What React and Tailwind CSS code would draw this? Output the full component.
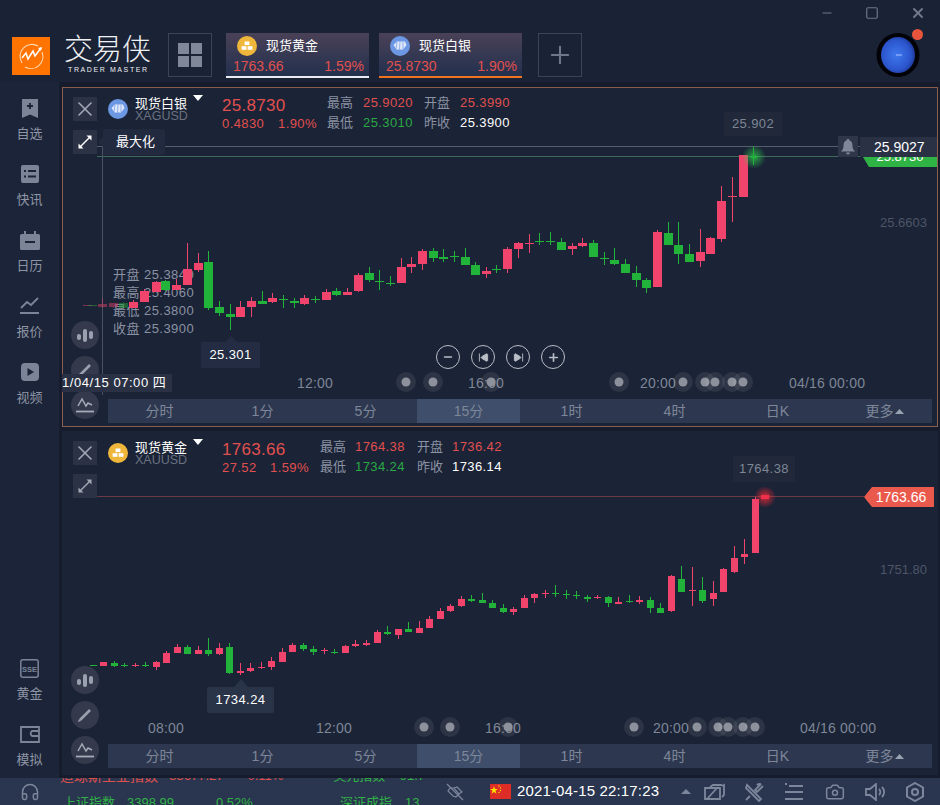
import React from 'react';
import { Minus, Square, X, Headphones, Camera, Plus, SkipBack, SkipForward } from 'lucide-react';

const P = '#f0446c', G = '#22b33a';
// [zoomX, wickTop, wickBottom, bodyTop, bodyBottom, colour]
const silverA = [
  [80,226,228,226,228,P],[95,224,228,224,228,G],[125,205,235,222,230,P],[158,218,234,218,230,P],[190,216,235,220,235,G],[220,210,235,215,235,P],[253,178,215,183,215,P],[287,152,185,155,185,P],[316,150,182,152,180,G],[349,148,180,165,180,P],[382,38,165,118,165,P],[415,68,125,100,120,P],[445,62,240,96,235,G],[478,212,258,231,248,G],[511,222,300,253,260,G],[541,212,262,231,262,P],[574,200,262,212,231,P],[607,182,222,213,221,G],[637,188,218,204,216,P],[670,195,235,207,210,G],[703,205,235,214,218,G],[733,195,225,204,222,P],[766,198,218,208,210,G],[799,178,210,186,210,P],[829,175,197,183,194,G],[862,173,195,186,194,P],[895,128,187,135,183,P],[928,112,157,129,150,G],[958,120,180,153,156,G],[991,137,168,158,160,G],[1024,85,160,111,159,P],[1054,80,128,102,110,P],[1087,57,120,63,102,P],[1120,55,97,63,83,G],[1150,58,97,82,86,G],[1183,62,95,79,81,G],[1216,55,105,82,104,G],[1246,95,135,105,134,G],[1279,110,145,123,132,P],[1309,105,130,117,119,G],
];
const silverB = [
  [22,172,250,178,237,P],[55,155,205,158,178,P],[88,133,190,158,163,P],[118,130,165,152,155,G],[151,127,165,152,155,G],[184,145,180,157,180,G],[217,158,195,168,177,P],[247,143,172,158,168,P],[280,150,202,159,200,G],[313,185,225,204,208,G],[343,175,225,210,222,G],[376,207,250,222,248,G],[409,228,292,250,270,G],[439,265,310,270,294,G],[472,120,292,126,292,P],[505,97,165,129,165,G],[535,97,222,166,192,G],[568,162,217,192,216,G],[601,118,230,186,213,P],[631,140,192,144,192,P],[664,-12,155,33,148,P],[697,-39,97,18,21,P],[730,-105,21,-105,21,P],
];
const goldA = [
  [100,705,707,705,707,G],[130,695,709,697,707,P],[163,692,712,698,709,G],[193,698,710,704,708,G],[226,698,712,704,707,P],[256,695,712,705,709,G],[289,692,720,697,711,P],[319,662,700,669,698,P],[352,643,670,651,668,P],[382,645,672,651,671,G],[415,648,672,660,671,P],[445,625,677,660,672,G],[478,640,674,654,672,P],[508,638,732,651,728,G],[541,698,736,723,730,P],[571,700,727,713,723,P],[604,697,716,711,714,P],[634,680,720,692,711,P],[667,655,697,666,695,P],[697,640,666,645,665,P],[730,638,662,645,657,G],[760,648,675,657,667,G],[793,655,672,661,664,P],[823,658,672,665,668,G],[856,645,670,649,668,P],[886,630,650,642,648,P],[919,630,648,640,645,P],[952,600,640,606,639,P],[982,587,614,606,611,G],[1015,597,627,597,616,P],[1045,575,607,598,605,G],[1078,573,610,594,608,P],[1108,557,595,567,594,P],[1141,535,568,543,567,P],[1171,522,545,527,543,P],[1204,498,530,506,528,P],[1234,494,515,508,513,G],[1267,488,520,511,519,G],[1297,510,534,519,533,G],[1330,522,549,534,546,G],[1360,530,555,537,545,P],
];
const goldB = [
  [13,405,445,414,444,P],[43,400,430,402,413,P],[76,390,413,398,402,P],[106,375,410,398,402,G],[139,390,416,401,405,G],[169,393,418,404,409,G],[202,405,425,410,416,G],[232,405,418,411,415,P],[265,408,440,410,428,G],[295,410,433,427,431,P],[328,405,430,422,425,G],[358,408,432,420,426,P],[391,412,460,420,444,G],[421,428,460,444,458,G],[454,345,455,348,453,P],[484,318,395,357,395,G],[517,320,437,390,393,P],[547,350,430,390,423,G],[580,362,437,399,417,P],[610,325,395,327,395,P],[643,258,338,294,335,P],[673,238,312,283,291,P],[706,110,278,118,278,P],
];

function Candles({ data, ox, oy, w, faded = 0 }) {
  return data.map((c, i) => {
    const x = Math.round(ox + c[0] / 3);
    const o = x < faded ? 0.45 : 1;
    return (
      <g key={i} opacity={o}>
        <rect x={x} y={oy + c[1] / 3} width={1} height={(c[2] - c[1]) / 3} fill={c[5]} />
        <rect x={x - Math.floor(w / 2)} y={oy + c[3] / 3} width={w} height={Math.max(1, (c[4] - c[3]) / 3)} fill={c[5]} />
      </g>
    );
  });
}

function Dots({ xs, y }) {
  return xs.map((x) => (
    <g key={x}>
      <circle cx={x} cy={y} r={10} fill="#ffffff" opacity={0.08} />
      <circle cx={x} cy={y} r={4.5} fill="#8d919b" />
    </g>
  ));
}

const Candle = () => (
  <svg width="18" height="18" viewBox="0 0 18 18" fill="#9aa0ad">
    <rect x="1" y="8" width="4" height="6" rx="2" />
    <rect x="7" y="3" width="4" height="13" rx="2" />
    <rect x="13" y="5" width="4" height="8" rx="2" />
  </svg>
);
const Pencil = () => (
  <svg width="16" height="16" viewBox="0 0 16 16" fill="none" stroke="#9aa0ad" strokeWidth="2.6">
    <path d="M3 13 L13 3" />
    <path d="M1 15 L2 12 L4 14 Z" fill="#9aa0ad" stroke="none" />
  </svg>
);
const LineIco = () => (
  <svg width="20" height="18" viewBox="0 0 20 18" fill="none" stroke="#a5abb8" strokeWidth="1.5">
    <path d="M3 10 L7 3 L11 10 L13 7 L17 9" />
    <path d="M1 15.5 H19" strokeWidth="1.8" />
  </svg>
);
const Round = ({ children }) => (
  <div className="w-[28px] h-[28px] rounded-full bg-[#343a4c] flex items-center justify-center">{children}</div>
);
const Sq = ({ children }) => (
  <div className="w-[24px] h-[24px] bg-[#2b3245] flex items-center justify-center">{children}</div>
);
const Expand = ({ c }) => (
  <svg width="16" height="16" viewBox="0 0 16 16" fill="none" stroke={c} strokeWidth="1.5">
    <path d="M2.5 13.5 L13.5 2.5" />
    <path d="M1.5 9.5 V14.5 H6.5 Z M9.5 1.5 H14.5 V6.5 Z" fill={c} stroke="none" />
  </svg>
);
const Nav = ({ children }) => (
  <div className="w-[24px] h-[24px] rounded-full border border-[#b9bdc6] flex items-center justify-center text-[#b9bdc6]">{children}</div>
);

const Bars = () => (
  <div className="relative z-10 grid grid-cols-8 w-[824px] h-[24px] ml-[45px] bg-[#2d3850] text-[14px] text-[#7e8799] text-center leading-[24px]">
    <div>分时</div><div>1分</div><div>5分</div>
    <div className="bg-[#3f4e6b]">15分</div>
    <div>1时</div><div>4时</div><div>日K</div>
    <div className="flex items-center justify-center gap-[1px] pl-[8px]">更多
      <svg width="9" height="5" viewBox="0 0 9 5" fill="#9aa2b2"><path d="M4.5 0 L9 5 H0 Z" /></svg>
    </div>
  </div>
);

const Caret = () => (
  <svg width="10" height="6" viewBox="0 0 10 6" fill="#ffffff"><path d="M0 0 H10 L5 6 Z" /></svg>
);
const SilverCoin = ({ s }) => (
  <svg width={s} height={s} viewBox="0 0 20 20">
    <circle cx="10" cy="10" r="10" fill="#6c97e2" />
    <path d="M3.5 9 L7 5.5 H15 L16.5 9 L13 13.5 H6.5 Z" fill="#dfe9fb" />
    <path d="M7 6 L6 13 M10 5.5 L9.5 13.5 M13 6 L13 13" stroke="#6c97e2" strokeWidth=".7" />
  </svg>
);
const GoldCoin = ({ s }) => (
  <svg width={s} height={s} viewBox="0 0 20 20">
    <circle cx="10" cy="10" r="10" fill="#efb63c" />
    <rect x="7.6" y="5.5" width="4.8" height="3.6" fill="#fff" />
    <rect x="4.6" y="10.2" width="4.8" height="3.6" fill="#fff" />
    <rect x="10.6" y="10.2" width="4.8" height="3.6" fill="#fff" />
  </svg>
);

const R = 'text-[#e0504e]', W = 'text-white', GN = 'text-[#2aa944]', L = 'text-[#8a92a3]';

function Head({ coin, name, code, price, chg, pct, high, low, open, prev, priceW, labelW, gapPct }) {
  return (
    <div className="relative z-10 flex pl-[10px] pt-[9px]">
      <div className="flex flex-col gap-[9px] w-[24px]">
        <Sq><X size={24} strokeWidth={1.6} color="#a3a8b4" /></Sq>
        <Sq><Expand c={name === '现货白银' ? '#ffffff' : '#a3a8b4'} /></Sq>
      </div>
      <div className="ml-[11px] mt-[2px] w-[20px]">{coin}</div>
      <div className="ml-[7px] w-[87px]">
        <div className="flex items-start text-[13px] leading-[13px] text-white">{name}<span className="ml-[6px] -mt-[2px]"><Caret /></span></div>
        <div className="text-[12.5px] leading-[13px] text-[#69717f]">{code}</div>
      </div>
      <div className={`${priceW}`}>
        <div className={`text-[17px] leading-[18px] tracking-[.3px] ${R}`}>{price}</div>
        <div className={`flex text-[13px] leading-[18px] tracking-[.4px] ${R}`}>
          <span className={gapPct}>{chg}</span><span>{pct}</span>
        </div>
      </div>
      <div className={`grid ${labelW} text-[13px] leading-[20px] -mt-[4px] h-[40px] tracking-[.4px]`}>
        <span className={`${L} tracking-normal`}>最高</span><span className={R}>{high}</span><span className={`${L} tracking-normal`}>开盘</span><span className={R}>{open}</span>
        <span className={`${L} tracking-normal`}>最低</span><span className={GN}>{low}</span><span className={`${L} tracking-normal`}>昨收</span><span className={W}>{prev}</span>
      </div>
    </div>
  );
}

function Tab({ coin, name, price, pct, line }) {
  return (
    <div className={`w-[143px] h-[45px] border-b-2 ${line} bg-gradient-to-b from-[#4a4157] to-[#22304e] flex flex-col`}>
      <div className="flex items-center h-[25px] pl-[11px] gap-[9px] text-[13px] text-white">
        {coin}<span>{name}</span>
      </div>
      <div className="flex justify-between px-[7px] pr-[5px] text-[14px] leading-[17px] text-[#e0504e]">
        <span>{price}</span><span>{pct}</span>
      </div>
    </div>
  );
}

const Side = ({ icon, label }) => (
  <div className="flex flex-col items-center h-[66px]">
    <div className="h-[24px] flex items-center justify-center">{icon}</div>
    <div className="text-[13px] leading-[18px] mt-[5px] text-[#8e95a5]">{label}</div>
  </div>
);
const I = '#7c8497';

const tickerRow = 'flex h-[26px] items-center text-[13px] whitespace-nowrap';

export default function App() {
  return (
    <div className="w-[940px] h-[805px] overflow-hidden flex flex-col bg-[#161c2b] text-[#8a92a3] [font-family:'Liberation_Sans','Noto_Sans_CJK_SC',sans-serif]">
      {/* header */}
      <header className="h-[82px] bg-[#1a2235] shrink-0">
        <div className="h-[25px] flex justify-end items-center pr-[14px] gap-[31px] text-[#6f7789]">
          <Minus size={14} strokeWidth={2} />
          <Square size={14} strokeWidth={2} />
          <X size={16} strokeWidth={3} />
        </div>
        <div className="flex items-start mt-[8px] pl-[12px]">
          <div className="w-[38px] h-[38px] mt-[4px] bg-[#ff7300] flex items-center justify-center">
            <svg width="30" height="30" viewBox="0 0 30 30" fill="none" stroke="#ffd9b0" strokeWidth="1.1">
              <path d="M6 22 A12 12 0 0 1 22 5" />
              <path d="M26 11 A12 12 0 0 1 9 26" />
              <path d="M6 17 L10 12 L12 18 L17 10 L19 15 L25 7" strokeWidth="1.5" stroke="#fff" />
              <path d="M22 7 L26 6 L25 10 Z" fill="#fff" stroke="none" />
            </svg>
          </div>
          <div className="w-[104px] ml-[14px] mt-[1px] text-[#eef0f3]">
            <div className="text-[29px] leading-[32px] font-light w-[88px] whitespace-nowrap">交易侠</div>
            <div className="text-[7px] leading-[8px] tracking-[1.6px] ml-[4px] whitespace-nowrap">TRADER MASTER</div>
          </div>
          <div className="w-[44px] h-[44px] border border-[#3c4357] flex items-center justify-center">
            <div className="grid grid-cols-2 gap-[2px]">
              <div className="w-[11px] h-[11px] bg-[#7f8799]" /><div className="w-[11px] h-[11px] bg-[#7f8799]" />
              <div className="w-[11px] h-[11px] bg-[#7f8799]" /><div className="w-[11px] h-[11px] bg-[#7f8799]" />
            </div>
          </div>
          <div className="ml-[14px]">
            <Tab coin={<GoldCoin s={20} />} name="现货黄金" price="1763.66" pct="1.59%" line="border-[#e8ecf2]" />
          </div>
          <div className="ml-[10px]">
            <Tab coin={<SilverCoin s={20} />} name="现货白银" price="25.8730" pct="1.90%" line="border-[#f0741e]" />
          </div>
          <div className="ml-[16px] w-[44px] h-[44px] border border-[#3c4357] flex items-center justify-center">
            <Plus size={28} strokeWidth={1.8} color="#6f7789" />
          </div>
          <div className="ml-[294px] relative w-[44px] h-[44px]">
            <svg width="44" height="45" viewBox="0 0 44 45">
              <defs>
                <radialGradient id="pl" cx="45%" cy="50%" r="60%">
                  <stop offset="0%" stopColor="#3f78f0" />
                  <stop offset="70%" stopColor="#2b55cc" />
                  <stop offset="100%" stopColor="#1a2f86" />
                </radialGradient>
              </defs>
              <ellipse cx="22" cy="22" rx="21.5" ry="22" fill="#020207" />
              <ellipse cx="22" cy="22" rx="17" ry="18" fill="url(#pl)" />
              <path d="M20 22 H26" stroke="#a8c4ff" strokeWidth="1" />
            </svg>
            <div className="absolute right-[-3px] top-[-4px] w-[11px] h-[11px] rounded-full bg-[#e8553c]" />
          </div>
        </div>
      </header>

      <div className="flex h-[696px] shrink-0">
        {/* sidebar */}
        <aside className="w-[60px] bg-[#1b2438] border-r border-[#171d2c] flex flex-col justify-between pt-[14px] pb-[8px]">
          <div>
            <Side label="自选" icon={
              <svg width="16" height="19" viewBox="0 0 16 19"><path d="M0 0 H16 V19 L8 15.5 L0 19 Z" fill={I} /><path d="M8 4 V10 M5 7 H11" stroke="#1b2438" strokeWidth="1.8" /></svg>} />
            <Side label="快讯" icon={
              <svg width="18" height="18" viewBox="0 0 18 18"><rect width="18" height="18" rx="2" fill={I} /><path d="M3 6 H5 M7 6 H15 M3 11.5 H5 M7 11.5 H15" stroke="#1b2438" strokeWidth="1.8" /></svg>} />
            <Side label="日历" icon={
              <svg width="20" height="19" viewBox="0 0 20 19"><rect y="3" width="20" height="16" rx="1.5" fill={I} /><rect x="4" width="2" height="4" fill={I} /><rect x="14" width="2" height="4" fill={I} /><path d="M5 11 H15" stroke="#1b2438" strokeWidth="2" /></svg>} />
            <Side label="报价" icon={
              <svg width="20" height="18" viewBox="0 0 20 18" fill="none" stroke={I}><path d="M1 11 L7 5 L11 8 L18 1" strokeWidth="1.8" /><path d="M0 16 H19" strokeWidth="2" /></svg>} />
            <Side label="视频" icon={
              <svg width="18" height="18" viewBox="0 0 18 18"><rect width="18" height="18" rx="4" fill={I} /><path d="M6.5 5 L13 9 L6.5 13 Z" fill="#1b2438" /></svg>} />
          </div>
          <div className="-mb-[18px]">
            <Side label="黄金" icon={
              <svg width="19" height="19" viewBox="0 0 19 19"><rect x=".8" y=".8" width="17.4" height="17.4" rx="2" fill="none" stroke={I} strokeWidth="1.5" /><text x="9.5" y="12.5" textAnchor="middle" fontSize="7.5" fontWeight="700" fill={I} fontFamily="Liberation Sans">SSE</text></svg>} />
            <Side label="模拟" icon={
              <svg width="20" height="17" viewBox="0 0 20 17" fill="none" stroke={I} strokeWidth="1.8"><path d="M19 4 V1 H1 V16 H19 V11" /><path d="M19 5 H12 A3 3 0 0 0 12 10 H19 Z" /></svg>} />
          </div>
        </aside>

        <main className="flex-1 pt-[5px] pl-[2px] pr-[2px]">
          {/* silver panel */}
          <section className="relative h-[340px] w-[876px] bg-[#1b2336] border border-[#8a5d4c] flex flex-col justify-between pb-[3px]">
            <div className="absolute left-[50px] top-[178px] text-[13px] leading-[18px] text-[#8a92a3] whitespace-pre tracking-[.45px]">
              <div>开盘 25.3840</div><div>最高 25.4060</div><div>最低 25.3800</div><div>收盘 25.3900</div>
            </div>
            <svg className="absolute -left-px -top-px" width="876" height="340" viewBox="62 87 876 340">
              <defs>
                <radialGradient id="gg"><stop offset="0%" stopColor="#2ed14e" stopOpacity=".75" /><stop offset="100%" stopColor="#2ed14e" stopOpacity="0" /></radialGradient>
              </defs>
              <line x1="102.5" x2="102.5" y1="146" y2="395" stroke="#4a5162" />
              <line x1="97" x2="860" y1="146.5" y2="146.5" stroke="#565d6d" />
              <line x1="97" x2="864" y1="156.5" y2="156.5" stroke="#3f6a58" />
              <g shapeRendering="crispEdges">
                <Candles data={silverA} ox={60} oy={230} w={9} faded={130} />
                <Candles data={silverB} ox={500} oy={190} w={9} />
              </g>
              <circle cx="754" cy="157" r="12" fill="url(#gg)" />
              <rect x="753" y="147" width="1" height="18" fill={G} />
              <rect x="751" y="156" width="6" height="2" fill={G} />
              <g fontSize="14" fill="#7e8695" fontFamily="Liberation Sans" letterSpacing=".2">
                <text x="297" y="388">12:00</text>
                <text x="468" y="388">16:00</text>
                <text x="640" y="388">20:00</text>
                <text x="789" y="388">04/16 00:00</text>
              </g>
              <text x="880" y="227" fontSize="13" fill="#4d5567" fontFamily="Liberation Sans">25.6603</text>
              <Dots xs={[406, 433, 491, 619, 683, 705, 715, 732, 743]} y={382} />
            </svg>

            <Head coin={<SilverCoin s={20} />} name="现货白银" code="XAGUSD" price="25.8730" chg="0.4830" pct="1.90%"
              high="25.9020" low="25.3010" open="25.3990" prev="25.3900" priceW="w-[105px]" gapPct="w-[56px]"
              labelW="grid-cols-[36px_61px_36px_60px]" />

            <div className="absolute left-[40px] top-[41px] w-[62px] h-[26px] rounded-[2px] bg-[#222a3f] text-white text-[13px] leading-[26px] pl-[13px]">最大化
              <div className="absolute left-[-5px] top-[8px] w-0 h-0 border-y-[5px] border-y-transparent border-r-[5px] border-r-[#222a3f]" />
            </div>
            <div className="absolute left-[661px] top-[24px] w-[58px] h-[24px] bg-[#20283a] text-[#7e8695] text-[13px] leading-[24px] text-center tracking-[.4px]">25.902</div>
            <div className="absolute left-[138px] top-[254px] w-[59px] h-[26px] bg-[#232c42] text-white text-[13px] leading-[26px] text-center tracking-[.4px]">25.301
              <div className="absolute left-[24px] top-[-6px] w-0 h-0 border-x-[6px] border-x-transparent border-b-[6px] border-b-[#232c42]" />
            </div>

            <div className="absolute right-0 top-[62px] w-[74px] h-[17px] bg-[#2fb344] [clip-path:polygon(0_41%,100%_41%,100%_100%,8%_100%)] text-[13px] leading-[14px] text-white text-center">25.8730</div>
            <div className="absolute right-[79px] top-[48px] w-[20px] h-[21px] bg-[#2f3649] flex items-center justify-center">
              <svg width="14" height="16" viewBox="0 0 14 16" fill="#7f8697"><path d="M7 0 A1.5 1.5 0 0 1 8.5 1.6 C11 2.4 11.5 4.6 11.5 7 C11.5 9.5 12.5 11 14 12.5 H0 C1.5 11 2.5 9.5 2.5 7 C2.5 4.6 3 2.4 5.5 1.6 A1.5 1.5 0 0 1 7 0 Z" /><path d="M5 13.5 H9 A2 2 0 0 1 5 13.5 Z" /></svg>
            </div>
            <div className="absolute right-0 top-[49px] w-[77px] h-[20px] bg-[#2a3145] text-white text-[14px] leading-[20px] pl-[14px]">25.9027</div>

            <div className="absolute left-[8px] top-[233px] flex flex-col gap-[7px]">
              <Round><Candle /></Round><Round><Pencil /></Round><Round><LineIco /></Round>
            </div>
            <div className="absolute -left-px top-[286px] w-[110px] h-[18px] bg-[#2a3145] text-white text-[13px] leading-[18px] whitespace-nowrap tracking-[.55px]">1/04/15 07:00 四</div>
            <div className="absolute left-[373px] top-[257px] flex gap-[11px]">
              <Nav><Minus size={12} strokeWidth={3} /></Nav>
              <Nav><SkipBack size={11} fill="currentColor" /></Nav>
              <Nav><SkipForward size={11} fill="currentColor" /></Nav>
              <Nav><Plus size={13} strokeWidth={3} /></Nav>
            </div>
            <Bars />
          </section>

          {/* gold panel */}
          <section className="relative h-[344px] w-[876px] mt-[4px] bg-[#1b2336] flex flex-col justify-between pb-[7px] pt-[1px] pl-[1px]">
            <svg className="absolute left-0 top-0" width="876" height="344" viewBox="62 431 876 344">
              <defs>
                <radialGradient id="rg"><stop offset="0%" stopColor="#ff2a38" stopOpacity=".8" /><stop offset="100%" stopColor="#ff2a38" stopOpacity="0" /></radialGradient>
              </defs>
              <line x1="97" x2="864" y1="496.5" y2="496.5" stroke="#6a3b45" />
              <g shapeRendering="crispEdges">
                <Candles data={goldA} ox={60} oy={430} w={7} />
                <Candles data={goldB} ox={520} oy={460} w={7} />
              </g>
              <circle cx="765" cy="497" r="11" fill="url(#rg)" />
              <rect x="761" y="495" width="8" height="4" fill="#f0304a" />
              <g fontSize="14" fill="#7e8695" fontFamily="Liberation Sans" letterSpacing=".2">
                <text x="148" y="733">08:00</text>
                <text x="316" y="733">12:00</text>
                <text x="485" y="733">16:00</text>
                <text x="653" y="733">20:00</text>
                <text x="800" y="733">04/16 00:00</text>
              </g>
              <text x="880" y="574" fontSize="13" fill="#4d5567" fontFamily="Liberation Sans">1751.80</text>
              <Dots xs={[424, 450, 508, 634, 697, 718, 728, 743, 755]} y={727} />
            </svg>

            <Head coin={<GoldCoin s={20} />} name="现货黄金" code="XAUUSD" price="1763.66" chg="27.52" pct="1.59%"
              high="1764.38" low="1734.24" open="1736.42" prev="1736.14" priceW="w-[98px]" gapPct="w-[48px]"
              labelW="grid-cols-[35px_62px_35px_60px]" />

            <div className="absolute left-[671px] top-[25px] w-[62px] h-[26px] bg-[#20283a] text-[#7e8695] text-[13px] leading-[26px] text-center tracking-[.4px]">1764.38</div>
            <div className="absolute left-[145px] top-[256px] w-[67px] h-[26px] rounded-[2px] bg-[#2a3449] text-white text-[13px] leading-[26px] text-center tracking-[.4px]">1734.24
              <div className="absolute left-[27px] top-[-8px] w-0 h-0 border-x-[7px] border-x-transparent border-b-[8px] border-b-[#2a3449]" />
            </div>
            <div className="absolute left-[802px] top-[56px] w-[70px] h-[20px] bg-[#ea5a4c] [clip-path:polygon(0_50%,8px_0,100%_0,100%_100%,8px_100%)] text-white text-[14px] leading-[20px] text-center pl-[4px]">1763.66</div>
            <div className="absolute left-[9px] top-[235px] flex flex-col gap-[7px]">
              <Round><Candle /></Round><Round><Pencil /></Round><Round><LineIco /></Round>
            </div>
            <Bars />
          </section>
        </main>
      </div>

      {/* footer */}
      <footer className="relative h-[27px] shrink-0 bg-[#2a3650] flex items-center text-[#7c879c] overflow-hidden">
        <div className="w-[60px] flex justify-center"><Headphones size={20} strokeWidth={1.8} /></div>
        <div className="w-[365px] h-[27px] overflow-hidden">
          <div className="-mt-[15px]">
            <div className={tickerRow}>
              <span className="w-[112px] text-[#e0504e] text-[14px]">道琼斯工业指数</span>
              <span className="w-[80px] text-[#e0504e]">33677.27</span>
              <span className="w-[88px] text-[#e0504e]">0.11%</span>
              <span className="w-[68px] text-[#2fb344]">美元指数</span>
              <span className="text-[#2fb344]">91.7</span>
            </div>
            <div className={`${tickerRow} text-[#2fb344] pl-[3px] mt-[1px]`}>
              <span className="w-[64px]">上证指数</span>
              <span className="w-[89px]">3398.99</span>
              <span className="w-[124px]">0.52%</span>
              <span className="w-[65px]">深证成指</span>
              <span>13</span>
            </div>
          </div>
        </div>
        <svg className="ml-[21px]" width="18" height="18" viewBox="0 0 18 18" fill="none" stroke="#7c879c" strokeWidth="1.2">
          <path d="M1 1 L17 17" />
          <path d="M4 5 L2 8 L7 13 L10 14 L13 11 L8 5 Z" />
          <path d="M8 5 L11 4 L16 9 L13 11" />
        </svg>
        <svg className="ml-[26px]" width="21" height="15" viewBox="0 0 21 15">
          <rect width="21" height="15" fill="#de2c26" />
          <path d="M4 2 L5 5 L8 5 L5.5 6.8 L6.5 9.8 L4 8 L1.5 9.8 L2.5 6.8 L0 5 L3 5 Z" fill="#ffde00" />
          <circle cx="9" cy="2" r=".7" fill="#ffde00" /><circle cx="10.5" cy="4" r=".7" fill="#ffde00" /><circle cx="10.5" cy="6.5" r=".7" fill="#ffde00" /><circle cx="9" cy="8.5" r=".7" fill="#ffde00" />
        </svg>
        <span className="ml-[6px] w-[148px] text-white text-[15px] whitespace-nowrap tracking-[.15px]">2021-04-15 22:17:23</span>
        <svg className="ml-[16px]" width="10" height="5" viewBox="0 0 10 5" fill="#7c879c"><path d="M5 0 L10 5 H0 Z" /></svg>
        <svg className="ml-[13px]" width="22" height="18" viewBox="0 0 22 18" fill="none" stroke="#7c879c" strokeWidth="1.8"><path d="M1 5 H16 V16 H1 Z" /><path d="M18 3 L20 2 V12 L18 14 M6 4 L9 2 H18" /><path d="M3 16 L14 4" /></svg>
        <svg className="ml-[18px]" width="20" height="20" viewBox="0 0 20 20" fill="none" stroke="#7c879c" strokeWidth="1.8"><path d="M3 3 L17 17 L15 19 L2 6 Z M17 2 L11 8 L13 10 L19 4 M6 14 L2 18 M13 3 A4 4 0 0 1 17 2" /></svg>
        <svg className="ml-[20px]" width="20" height="18" viewBox="0 0 20 18" fill="none" stroke="#7c879c" strokeWidth="2"><path d="M1 1 H3 M5 3 H19 M1 9 H19 M1 16 H19" /></svg>
        <span className="ml-[21px]"><Camera size={20} strokeWidth={1.8} /></span>
        <svg className="ml-[20px]" width="20" height="18" viewBox="0 0 20 18" fill="none" stroke="#7c879c" strokeWidth="1.8"><path d="M1 6 H5 L11 1 V17 L5 12 H1 Z" /><path d="M14 6 A4 4 0 0 1 14 12 M17 4 A7 7 0 0 1 17 14" /></svg>
        <svg className="ml-[20px]" width="20" height="20" viewBox="0 0 20 20" fill="none" stroke="#7c879c" strokeWidth="2"><path d="M10 1 L18 5.5 V14.5 L10 19 L2 14.5 V5.5 Z" /><circle cx="10" cy="10" r="3" /></svg>
      </footer>
    </div>
  );
}
